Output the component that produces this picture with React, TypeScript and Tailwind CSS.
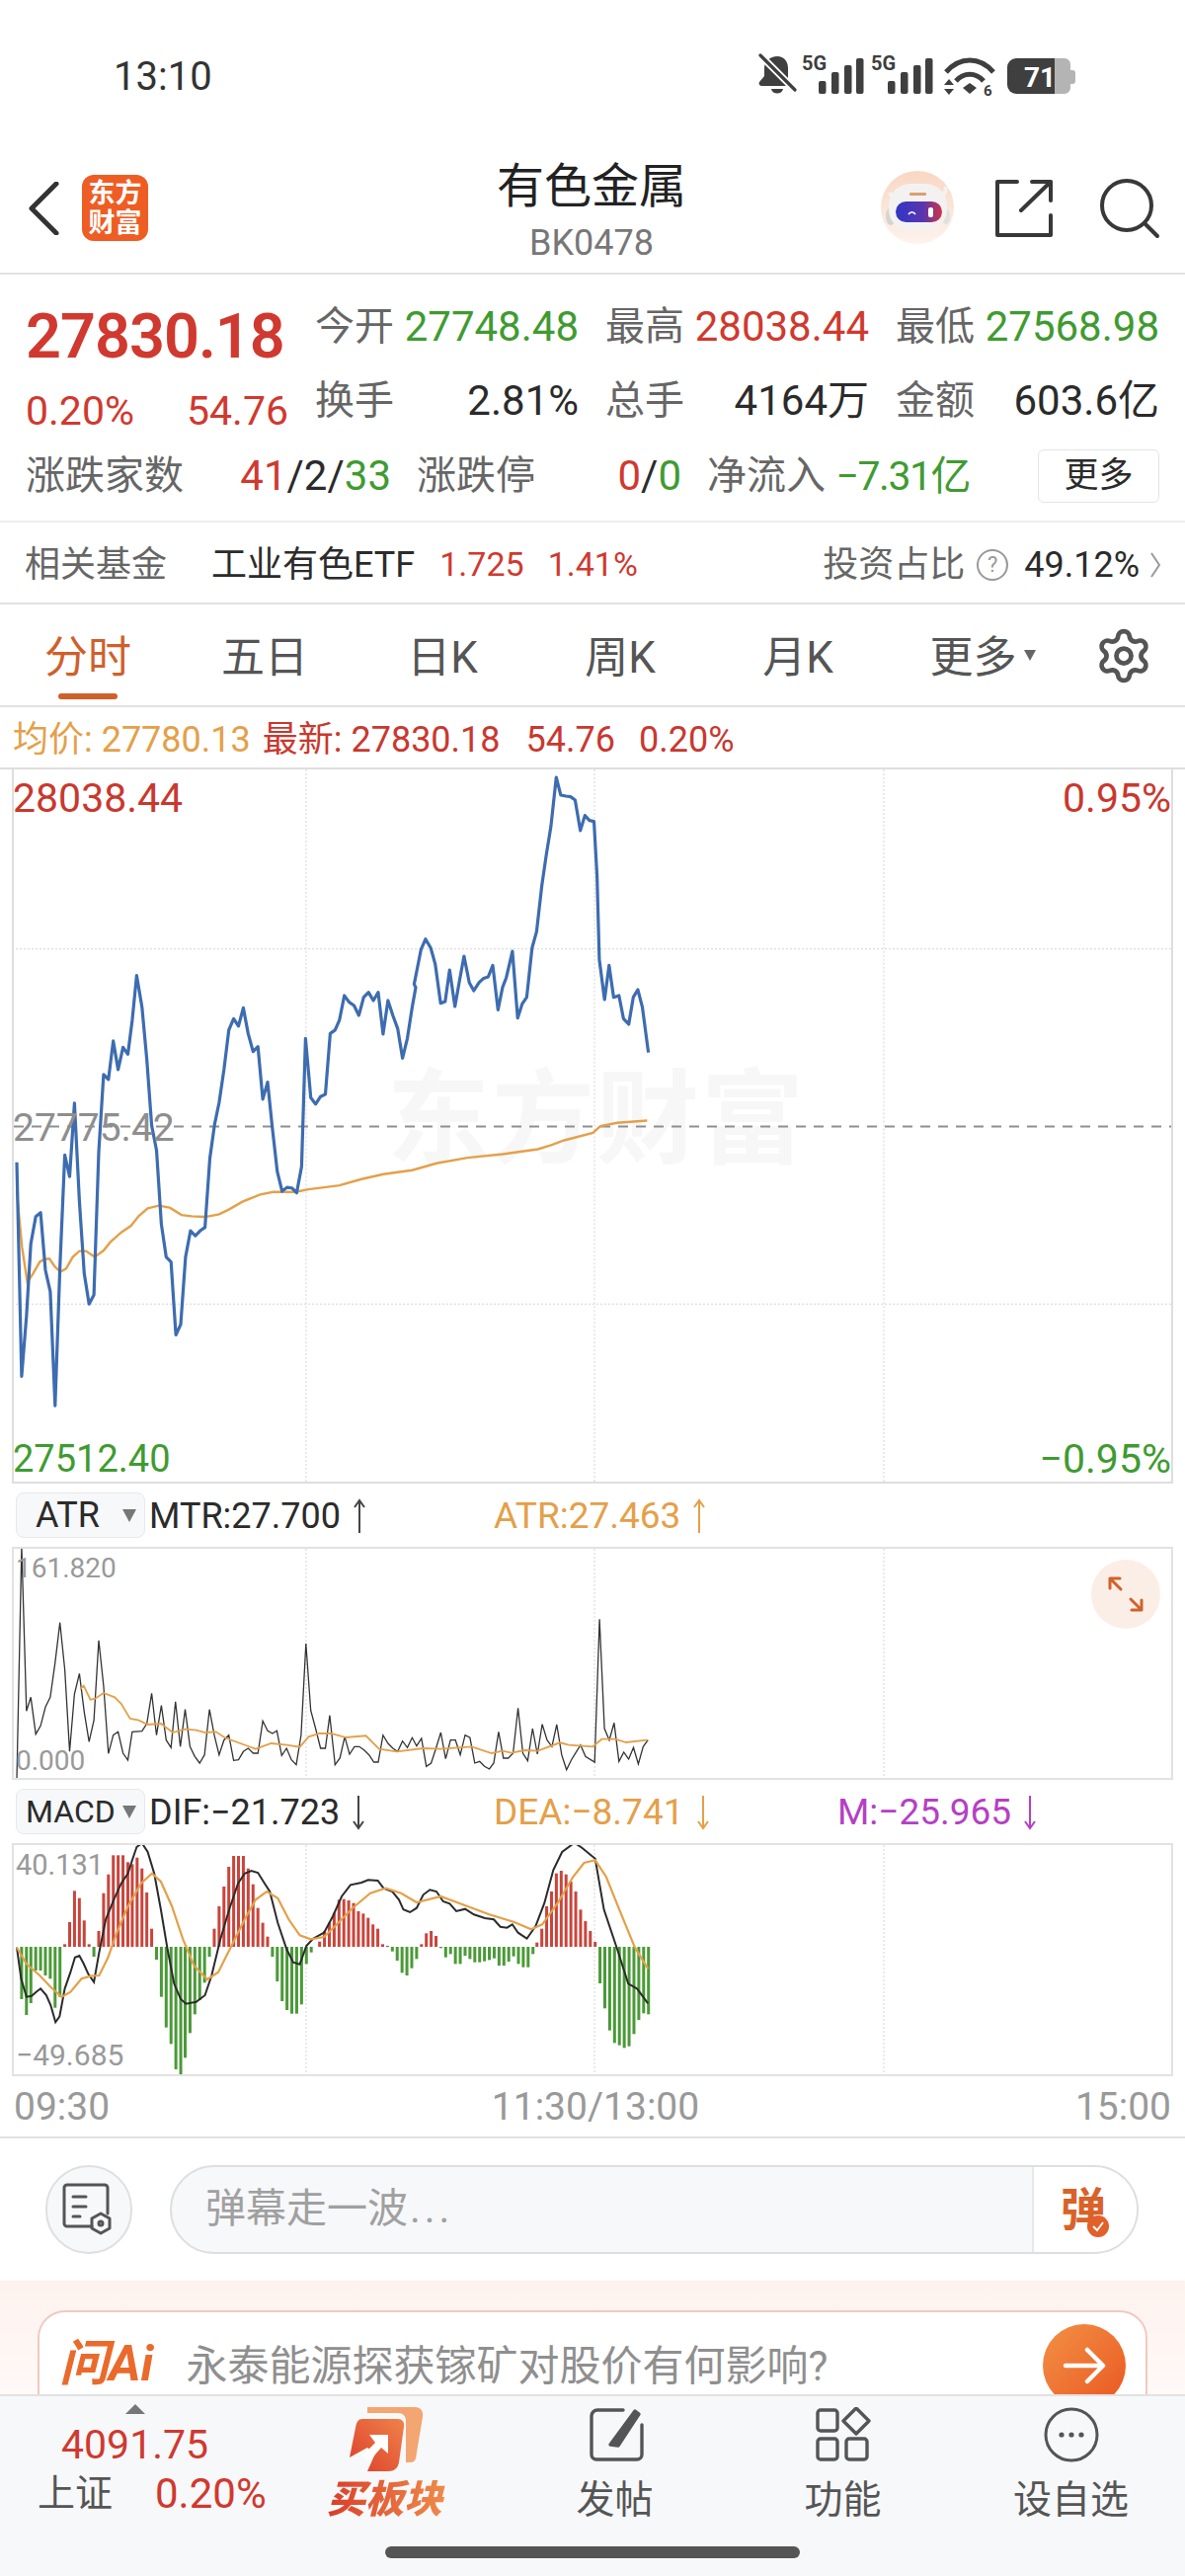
import React from "react";
import { Settings } from "lucide-react";

type P = number[];
const YEL = "#e4a049";

// traced chart data: pairs of picture coordinates
const blueA: P = [38,532,49,1183,60,1000,70,780,81,697,92,685,103,860,114,925,125,1272,136,850,147,510,158,575,169,352,180,650,191,870,202,963,213,935,224,500,235,265,246,280,257,163,268,250,279,182,290,203,300,100,310,-36,322,60,333,220,344,420,355,495,366,720,377,820,388,835,399,1057,410,1025,421,820,432,740,443,755,454,740,465,730,476,520,487,415,497,350,508,250,519,130,530,95,541,118,552,62,563,140,574,195,585,180,596,340,607,288,618,430,629,560,640,620,651,608,662,610,673,625,684,545,693,155,705,335,716,355,727,332,738,325,749,140,760,130,770,100,781,25,792,45,803,55,814,85,825,30,836,15,847,40,858,15,869,142,880,40,891,85,902,125,913,215,924,155,935,60,943,0];
const blueB: P = [548,1430,557,1325,563,1293,570,1320,576,1370,583,1488,589,1483,595,1387,602,1498,608,1420,614,1345,621,1425,627,1450,634,1425,640,1412,646,1408,652,1373,659,1508,665,1440,670,1410,678,1330,685,1533,691,1490,697,1470,704,1320,710,1270,717,1130,723,1035,729,950,736,801,742,855,749,858,755,860,761,870,768,963,774,917,780,932,786,935,790,1100,793,1355,800,1477,806,1373,812,1470,819,1465,825,1535,832,1552,838,1470,844,1447,850,1500,858,1638];
const yelMain: P = [38,620,50,790,62,897,75,870,90,835,100,827,112,825,125,850,137,865,150,855,165,820,180,802,195,802,215,820,235,800,250,775,275,745,297,725,315,695,335,672,360,664,385,670,412,692,435,696,465,698,497,690,520,675,550,652,590,630,620,622,670,622,700,614,770,602,820,583,870,568,935,556,990,535,1060,518,1140,507,1220,492,1250,480,1280,465,1345,442,1362,422,1400,412,1468,405];
const atrBlack: P = [38,905,49,197,60,697,70,655,81,767,92,742,103,685,114,655,125,550,136,428,147,570,158,820,169,645,180,583,191,700,202,790,213,725,224,482,235,620,246,826,257,770,268,760,279,825,290,846,300,760,322,758,333,735,344,643,355,770,366,680,377,785,388,808,398,668,409,805,420,692,431,805,442,835,453,855,464,830,475,692,486,770,497,830,508,785,519,770,530,847,541,845,552,820,563,810,574,825,585,825,596,727,607,757,618,765,628,757,639,832,650,810,661,845,672,860,683,770,694,492,705,695,716,750,727,810,738,810,748,710,760,860,771,840,782,775,793,828,804,805,815,805,826,815,837,830,848,852,858,852,869,770,880,795,891,810,902,820,913,788,924,808,935,778,945,803,956,780,967,865,978,855,989,810,1000,762,1011,842,1022,785,1033,785,1044,830,1055,770,1066,778,1077,855,1088,850,1099,865,1110,873,1120,855,1131,760,1142,840,1153,840,1164,825,1175,688,1186,825,1197,848,1208,750,1219,828,1230,737,1241,785,1252,805,1263,738,1274,830,1285,875,1296,845,1317,800,1328,835,1349,852,1360,418,1371,750,1382,785,1393,733,1404,850,1415,822,1426,843,1437,808,1448,858,1459,805,1470,785];
const atrYel: P = [182,630,190,620,205,662,215,660,235,642,260,655,275,675,295,720,315,725,335,738,365,735,392,762,420,752,445,755,465,762,490,760,510,778,545,795,580,812,615,795,650,800,680,806,700,775,725,765,750,765,785,777,830,772,860,812,900,820,960,810,1000,812,1070,805,1115,825,1140,818,1160,824,1190,816,1220,818,1270,793,1290,800,1345,805,1365,782,1395,782,1420,792,1468,785];
const dif: P = [38,515,48,610,60,665,72,662,82,650,92,640,105,660,115,690,126,742,135,725,147,640,160,590,170,545,180,540,190,565,200,595,213,620,225,530,240,430,258,370,275,320,290,290,300,250,310,210,322,198,335,225,350,290,365,400,380,520,395,625,410,672,422,686,445,680,465,660,480,600,500,490,520,400,540,320,555,290,570,282,585,288,600,320,612,345,630,440,650,520,665,560,680,566,695,510,710,488,735,470,755,420,775,360,795,325,820,318,835,310,857,312,870,335,890,345,905,370,915,400,930,408,945,395,960,355,975,340,990,345,1005,375,1020,382,1035,405,1055,398,1075,415,1100,426,1120,430,1135,452,1150,455,1162,445,1175,470,1195,488,1215,450,1235,380,1255,280,1275,225,1303,197,1320,212,1350,245,1370,400,1400,520,1425,625,1445,640,1470,685];
const dea: P = [38,515,60,565,90,600,115,635,140,665,160,650,185,610,205,602,225,600,245,545,265,470,290,390,320,320,345,290,365,315,390,390,415,490,440,570,470,612,495,590,525,510,555,430,580,370,605,345,630,365,655,430,680,478,705,490,735,483,760,450,800,395,840,350,875,335,910,350,945,378,1000,360,1050,385,1110,415,1165,437,1205,460,1230,445,1265,380,1300,300,1325,258,1350,250,1375,300,1405,400,1440,515,1470,580];
const bars: P = [49,672,60,720,70,684,81,585,92,585,103,600,114,610,125,698,136,665,147,505,158,438,169,343,180,365,191,433,202,505,213,543,224,465,235,350,246,293,257,235,268,235,279,235,290,256,300,262,311,242,322,275,333,348,344,458,355,552,366,665,377,758,388,808,399,885,410,905,420,850,431,775,442,718,453,675,464,622,475,543,486,458,497,390,508,330,519,270,530,237,541,237,552,237,563,275,574,323,585,395,596,440,607,482,618,543,629,618,640,678,651,705,662,716,673,716,684,688,695,565,706,530,725,497,736,465,747,440,758,410,769,370,780,368,791,372,802,380,813,405,824,412,835,425,846,445,857,458,868,505,879,510,890,527,901,555,912,592,923,600,934,578,945,550,956,505,967,472,978,465,989,480,1000,517,1011,545,1022,535,1033,565,1044,565,1055,540,1066,550,1077,560,1088,560,1099,557,1110,553,1121,548,1132,570,1143,570,1154,558,1165,542,1176,565,1187,575,1198,575,1209,535,1218,500,1229,458,1240,390,1251,345,1262,290,1273,282,1284,293,1295,315,1306,345,1317,400,1328,435,1339,465,1350,498,1361,624,1372,700,1383,767,1394,805,1405,812,1416,820,1427,815,1438,778,1449,735,1460,715,1471,718];

const line = (a: P, sx: number, oy: number) => {
  const out: string[] = [];
  for (let i = 0; i < a.length; i += 2) out.push(`${(a[i] / sx).toFixed(1)},${(oy + a[i + 1] / 3).toFixed(1)}`);
  return out.join(" ");
};

function Grid({ top, bottom, rows }: { top: number; bottom: number; rows: number[] }) {
  return (
    <g stroke="#d4d4d4" strokeWidth="1" strokeDasharray="2 2">
      {[310, 602, 895].map((x) => <line key={x} x1={x} x2={x} y1={top} y2={bottom} />)}
      {rows.map((y) => <line key={y} x1={12} x2={1188} y1={y} y2={y} />)}
    </g>
  );
}

function MainChart() {
  return (
    <div className="relative mx-[12px] h-[723px] border-x-2 border-b-2 border-[#dedede]">
      <svg className="absolute inset-0 h-full w-full" viewBox="14 779 1172 722" preserveAspectRatio="none">
        <Grid top={779} bottom={1501} rows={[961, 1321]} />
      </svg>
      <div className="absolute left-[378px] top-[296px] text-[104px] font-bold leading-[120px] tracking-[2px] text-[#f7f7f7]">东方财富</div>
      <svg className="absolute inset-0 h-full w-full" viewBox="14 779 1172 722" preserveAspectRatio="none">
        <line x1="14" x2="1186" y1="1141" y2="1141" stroke="#8f8f8f" strokeWidth="2" strokeDasharray="10 8" />
        <polyline fill="none" stroke={YEL} strokeWidth="2.4" points={line(yelMain, 2.24, 1000)} />
        <polyline fill="none" stroke="#3d6cb0" strokeWidth="3.2" strokeLinejoin="round" points={line(blueA, 2.24, 1000) + " " + line(blueB, 1.3067, 520)} />
      </svg>
      <span className="absolute left-[-1px] top-[6px] text-[41px] leading-[46px] text-[#c9382f]">28038.44</span>
      <span className="absolute right-0 top-[6px] text-[41px] leading-[46px] text-[#c9382f]">0.95%</span>
      <span className="absolute left-[-1px] top-[340px] text-[39px] leading-[46px] text-[#8e8e8e]">27775.42</span>
      <span className="absolute bottom-[0px] left-[-1px] text-[38px] leading-[46px] text-[#3f9b31]">27512.40</span>
      <span className="absolute bottom-[0px] right-0 text-[41px] leading-[46px] text-[#3f9b31]">−0.95%</span>
    </div>
  );
}

function Arrow({ up, color }: { up: boolean; color: string }) {
  return (
    <svg width="16" height="36" viewBox="0 0 16 36" className="ml-[11px]">
      <path d={up ? "M8 35V2M3 9l5-7 5 7" : "M8 1v33M3 27l5 7 5-7"} fill="none" stroke={color} strokeWidth="2" />
    </svg>
  );
}

function Legend({ name, small, a, ac, b, bc, c }: { name: string; small?: boolean; a: string; ac: string; b: string; bc: string; c?: React.ReactNode }) {
  return (
    <div className="relative flex h-[64px] items-center pl-[16px] text-[37px] leading-[42px]">
      <div className={"flex h-[46px] w-[131px] items-center justify-between rounded-[8px] border border-[#e6e8ec] bg-[#f7f8fa] pr-[8px] text-[#2b2b2b] " + (small ? "text-[32px]" : "text-[36px]")}>
        <span className={small ? "pl-[9px]" : "pl-[19px]"}>{name}</span>
        <span className="h-0 w-0 border-x-[7px] border-t-[13px] border-x-transparent border-t-[#777]" />
      </div>
      <div className="ml-[4px] flex w-[349px] items-center pt-[2px] text-[36px] text-[#2b2b2b]">{a}<Arrow up={ac === "up"} color="#444" /></div>
      <div className="flex w-[348px] items-center pt-[2px] text-[#e4a049]">{b}<Arrow up={bc === "up"} color="#e4a049" /></div>
      {c}
    </div>
  );
}

function AtrChart() {
  return (
    <div className="relative mx-[12px] h-[236px] border-2 border-[#e2e2e2]">
      <svg className="absolute inset-0 h-full w-full" viewBox="14 1568 1172 232" preserveAspectRatio="none">
        <Grid top={1568} bottom={1800} rows={[]} />
        <polyline fill="none" stroke="#333" strokeWidth="1.3" points={line(atrBlack, 2.24, 1500)} />
        <polyline fill="none" stroke={YEL} strokeWidth="1.8" points={line(atrYel, 2.24, 1500)} />
      </svg>
      <span className="absolute left-[2px] top-[2px] text-[28px] leading-[36px] text-[#999]">161.820</span>
      <span className="absolute bottom-[-1px] left-[2px] text-[28px] leading-[36px] text-[#999]">0.000</span>
      <div className="absolute right-[11px] top-[11px] flex h-[70px] w-[70px] items-center justify-center rounded-full bg-[#fbeee6]">
        <svg width="38" height="38" viewBox="0 0 38 38" fill="none" stroke="#d0622d" strokeWidth="3" strokeLinecap="round" strokeLinejoin="round">
          <path d="M3 13V3h10M3 3l11 11M35 25v10H25M35 35L24 24" />
        </svg>
      </div>
    </div>
  );
}

function MacdChart() {
  const rects: React.ReactNode[] = [];
  for (let i = 0; i < bars.length; i += 2) {
    const x = bars[i] / 2.24;
    const y = 1800 + bars[i + 1] / 3;
    const up = y < 1971;
    rects.push(<rect key={i} x={x - 1.5} width="3" y={up ? y : 1971} height={Math.abs(y - 1971)} fill={up ? "#c9453c" : "#4a9a37"} />);
  }
  return (
    <div className="relative mx-[12px] h-[236px] border-2 border-[#e2e2e2]">
      <svg className="absolute inset-0 h-full w-full" viewBox="14 1868 1172 232" preserveAspectRatio="none">
        <Grid top={1868} bottom={2100} rows={[]} />
        {rects}
        <polyline fill="none" stroke="#2b2b2b" strokeWidth="2" points={line(dif, 2.24, 1800)} />
        <polyline fill="none" stroke={YEL} strokeWidth="2.2" points={line(dea, 2.24, 1800)} />
      </svg>
      <span className="absolute left-[2px] top-[2px] text-[29px] leading-[36px] text-[#999]">40.131</span>
      <span className="absolute bottom-[1px] left-[2px] text-[30px] leading-[36px] text-[#999]">−49.685</span>
    </div>
  );
}

function StatusIcons() {
  return (
    <svg width="322" height="56" viewBox="768 46 322 56" fill="#3f3f3f" className="mr-[110px] mt-[46px]">
      <path d="M787 57c7 0 11 5 11 12v11l5 7h-31c-3 0-4-2-3-4l5-6v-8c0-7 6-12 13-12zM781 90h12c-1 6-11 6-12 0z" />
      <line x1="770" y1="56" x2="805" y2="91" stroke="#fff" strokeWidth="7" />
      <line x1="770" y1="56" x2="805" y2="91" stroke="#3f3f3f" strokeWidth="3.2" strokeLinecap="round" />
      <text x="812" y="71" fontSize="20" fontWeight="700" fontFamily="Roboto">5G</text>
      {[[829,82],[842,73],[855,66],[867,59]].map(([x, y]) => <rect key={x} x={x} y={y} width="7.5" height={95 - y} rx="2" />)}
      <text x="882" y="71" fontSize="20" fontWeight="700" fontFamily="Roboto">5G</text>
      {[[899,82],[912,73],[925,66],[937,59]].map(([x, y]) => <rect key={x} x={x} y={y} width="7.5" height={95 - y} rx="2" />)}
      <path d="M958 73c14-16 34-16 48 0" fill="none" stroke="#3f3f3f" strokeWidth="5" />
      <path d="M968 82c8-9 20-9 28 0" fill="none" stroke="#3f3f3f" strokeWidth="5" />
      <path d="M975 89l7-5 7 5-7 6z" />
      <path d="M956 86l5-6 5 6zM956 90h10l-5 6z" />
      <text x="996" y="97" fontSize="15" fontWeight="700" fontFamily="Roboto">6</text>
      <path d="M1068 59h10a6 6 0 016 6v6h2a3 3 0 013 3v8a3 3 0 01-3 3h-2v4a6 6 0 01-6 6h-10z" fill="#b4b4b4" />
      <path d="M1029 59h39v36h-39a9 9 0 01-9-9V68a9 9 0 019-9z" />
      <text x="1037" y="88" fontSize="28" fontWeight="700" fontFamily="Roboto" fill="#fff">71</text>
    </svg>
  );
}

function Robot() {
  return (
    <svg width="74" height="74" viewBox="0 0 74 74">
      <defs>
        <linearGradient id="av" x1="0" y1="0" x2="0" y2="1"><stop offset="0" stopColor="#f9d7c2" /><stop offset="1" stopColor="#fdf3ee" /></linearGradient>
        <linearGradient id="vis" x1="0" y1="0" x2="1" y2="0"><stop offset="0" stopColor="#2f37c4" /><stop offset="0.6" stopColor="#5b36ae" /><stop offset="1" stopColor="#cf3446" /></linearGradient>
      </defs>
      <circle cx="37" cy="37" r="37" fill="url(#av)" />
      <path d="M9 22c2 4 4 6 8 7M66 16c0 5-2 9-7 11" stroke="#f4f1ee" strokeWidth="4" fill="none" />
      <ellipse cx="10" cy="46" rx="5" ry="9" fill="#d6d4d2" />
      <ellipse cx="66" cy="46" rx="4" ry="8" fill="#e2e0de" />
      <rect x="8" y="13" width="59" height="48" rx="22" fill="#f3f2f1" />
      <rect x="29" y="22" width="17" height="3" rx="1" fill="#d9a071" />
      <rect x="15" y="31" width="47" height="21" rx="10.5" fill="url(#vis)" />
      <path d="M28 44c2-3 5-3 7 0" stroke="#fff" strokeWidth="1.6" fill="none" />
      <rect x="48" y="37" width="5" height="10" rx="2" fill="#fff" />
    </svg>
  );
}

function Header() {
  return (
    <div className="flex h-[119px] items-start border-b-2 border-[#e2e2e2]">
      <div className="flex w-[380px] pl-[28px] pt-[18px]">
        <svg width="32" height="54" viewBox="0 0 32 54" className="mt-[7px]"><path d="M29 2L4 27l25 25" fill="none" stroke="#333" strokeWidth="5" strokeLinecap="round" strokeLinejoin="round" /></svg>
        <div className="ml-[23px] flex h-[67px] w-[67px] flex-col items-center justify-center rounded-[12px] bg-[#ee5d24] text-[27px] font-bold leading-[30px] text-white"><span>东方</span><span>财富</span></div>
      </div>
      <div className="flex w-[438px] flex-col items-center">
        <div className="mt-[1px] text-[48px] leading-[58px] text-[#222]">有色金属</div>
        <div className="mt-[8px] text-[36px] leading-[40px] text-[#777]">BK0478</div>
      </div>
      <div className="flex pl-[74px] pt-[14px]">
        <Robot />
        <svg width="60" height="60" viewBox="0 0 60 60" className="ml-[41px] mt-[8px]" fill="none" stroke="#383838" strokeWidth="4" strokeLinecap="round" strokeLinejoin="round">
          <path d="M23 3H3v54h54V37M27 32L57 3M38 3h19v19" />
        </svg>
        <svg width="62" height="62" viewBox="0 0 62 62" className="ml-[46px] mt-[7px]" fill="none" stroke="#383838" strokeWidth="4" strokeLinecap="round">
          <circle cx="28" cy="28" r="25" /><path d="M46 46l13 13" />
        </svg>
      </div>
    </div>
  );
}

function Cell({ label, value, color }: { label: string; value: string; color: string }) {
  return (
    <div className="flex h-[75px] w-[267px] items-center justify-between">
      <span className="text-[#666]">{label}</span>
      <span className={"text-[42px] " + color}>{value}</span>
    </div>
  );
}

function Info() {
  return (
    <div className="h-[251px] border-b-2 border-[#eeeeee] px-[26px] text-[40px] leading-[48px]">
      <div className="flex h-[177px]">
        <div className="w-[294px] pt-[25px]">
          <div className="flex h-[75px] items-center text-[63px] font-semibold tracking-[-1px] text-[#d0392f]">27830.18</div>
          <div className="flex h-[75px] w-[266px] items-center justify-between text-[41px] text-[#d0392f]"><span>0.20%</span><span>54.76</span></div>
        </div>
        <div className="grid grid-cols-[267px_267px_267px] content-start gap-x-[27px] pt-[15px]">
          <Cell label="今开" value="27748.48" color="text-[#3f9b31]" />
          <Cell label="最高" value="28038.44" color="text-[#d0392f]" />
          <Cell label="最低" value="27568.98" color="text-[#3f9b31]" />
          <Cell label="换手" value="2.81%" color="text-[#2b2b2b]" />
          <Cell label="总手" value="4164万" color="text-[#2b2b2b]" />
          <Cell label="金额" value="603.6亿" color="text-[#2b2b2b]" />
        </div>
      </div>
      <div className="flex h-[54px] items-center">
        <div className="grid grid-cols-[370px_268px_266px] gap-x-[26px]">
          <div className="flex justify-between"><span className="text-[#666]">涨跌家数</span><span className="text-[42px]"><span className="text-[#d0392f]">41</span><span className="text-[#2b2b2b]">/2/</span><span className="text-[#3f9b31]">33</span></span></div>
          <div className="flex justify-between"><span className="text-[#666]">涨跌停</span><span className="text-[42px]"><span className="text-[#d0392f]">0</span><span className="text-[#2b2b2b]">/</span><span className="text-[#3f9b31]">0</span></span></div>
          <div className="flex justify-between"><span className="text-[#666]">净流入</span><span className="text-[41px] tracking-[-1.5px] text-[#3f9b31]">−7.31亿</span></div>
        </div>
        <div className="ml-auto flex h-[54px] w-[123px] items-center justify-center rounded-[6px] border border-[#e4e4e4] text-[35px] text-[#2b2b2b]">更多</div>
      </div>
    </div>
  );
}

function Fund() {
  return (
    <div className="flex h-[83px] items-center border-b-2 border-[#e2e2e2] pl-[25px] pr-[24px] pt-[4px] text-[36px]">
      <span className="text-[#666]">相关基金</span>
      <span className="ml-[45px] text-[#2b2b2b]">工业有色ETF</span>
      <span className="ml-[25px] text-[34px] text-[#d0392f]">1.725</span>
      <span className="ml-[24px] text-[34px] text-[#d0392f]">1.41%</span>
      <span className="ml-auto text-[#666]">投资占比</span>
      <span className="ml-[12px] flex h-[32px] w-[32px] items-center justify-center rounded-full border-2 border-[#999] text-[22px] leading-none text-[#999]">?</span>
      <span className="ml-[16px] text-[#2b2b2b]">49.12%</span>
      <svg width="12" height="28" viewBox="0 0 12 28" className="ml-[10px]"><path d="M2 2l8 12-8 12" fill="none" stroke="#999" strokeWidth="2" /></svg>
    </div>
  );
}

function Tabs() {
  const tabs = ["五日", "日K", "周K", "月K"];
  return (
    <div className="flex h-[104px] items-center border-b-2 border-[#e2e2e2] text-[44px] leading-[52px] text-[#555]">
      <div className="relative flex h-full w-[178px] items-center justify-center pt-[6px] text-[#cf602b]">
        分时
        <span className="absolute bottom-[6px] left-[59px] h-[6px] w-[60px] rounded-[3px] bg-[#cf602b]" />
      </div>
      {tabs.map((t) => <div key={t} className="flex w-[180px] justify-center pt-[6px]">{t}</div>)}
      <div className="flex w-[182px] items-center justify-center pl-[12px] pt-[6px]">
        更多
        <span className="ml-[7px] mt-[-6px] h-0 w-0 border-x-[6px] border-t-[11px] border-x-transparent border-t-[#666]" />
      </div>
      <Settings size={60} strokeWidth={1.9} color="#555" className="ml-[28px] mt-[2px]" />
    </div>
  );
}

function Bottom() {
  return (
    <div className="relative h-[261px] bg-[#fff]">
      <div className="flex h-[146px] items-center border-t-2 border-[#e2e2e2] pl-[46px] pr-[47px]">
        <div className="flex h-[90px] w-[88px] items-center justify-center rounded-full border-2 border-[#dfdfdf] bg-[#f7f8fa]">
          <svg width="54" height="54" viewBox="0 0 54 54" fill="none" stroke="#555" strokeWidth="3" strokeLinecap="round" strokeLinejoin="round">
            <path d="M30 44H5a3 3 0 01-3-3V5a3 3 0 013-3h38a3 3 0 013 3v26M11 14h13M11 24h13M11 34h7" />
            <path d="M39 31l9 5v10l-9 5-9-5V36z" /><circle cx="39" cy="41" r="2" />
          </svg>
        </div>
        <div className="ml-[38px] flex h-[90px] flex-1 overflow-hidden rounded-full border-2 border-[#dfdfdf] bg-[#f7f8fa]">
          <div className="flex flex-1 items-center pl-[34px] text-[41px] text-[#a0a0a0]">弹幕走一波<span className="pl-[2px] tracking-[4px]">...</span></div>
          <div className="relative flex w-[106px] items-center border-l-2 border-[#e8e8e8] bg-white pl-[27px] text-[46px] font-bold text-[#d9622a]">
            弹
            <span className="absolute left-[54px] top-[49px] flex h-[22px] w-[22px] items-center justify-center rounded-full bg-[#e2602a]">
              <svg width="14" height="14" viewBox="0 0 14 14"><path d="M2 7l4 4 6-8" fill="none" stroke="#fff" strokeWidth="2" /></svg>
            </span>
          </div>
        </div>
      </div>
      <div className="h-[115px] overflow-hidden bg-gradient-to-b from-[#fdf2ee] to-[#fff9f7] px-[38px] pt-[30px]">
        <div className="flex h-[120px] items-start rounded-t-[28px] border-2 border-[#f0c9bf] bg-white pl-[20px] pr-[20px] pt-[22px]">
          <span className="text-[50px] font-bold italic leading-[60px] text-[#ea6a2c]">问Ai</span>
          <span className="ml-[33px] mt-[5px] text-[42px] leading-[56px] text-[#8f8f8f]">永泰能源探获镓矿对股价有何影响?</span>
          <span className="ml-auto mt-[-10px] flex h-[84px] w-[84px] items-center justify-center rounded-full bg-gradient-to-br from-[#f29045] to-[#e9551f]">
            <svg width="44" height="44" viewBox="0 0 44 44" fill="none" stroke="#fff" strokeWidth="4.5" strokeLinecap="round" strokeLinejoin="round"><path d="M3 22h37M25 6l16 16-16 16" /></svg>
          </span>
        </div>
      </div>
    </div>
  );
}

function NavBar() {
  return (
    <div className="relative h-[184px] border-t-2 border-[#e2e2e2] bg-[#f7f8fa]">
      <div className="grid h-full grid-cols-[276px_231px_231px_231px_231px]">
        <div className="relative pl-[38px] pt-[25px]">
          <span className="absolute left-[127px] top-[8px] h-0 w-0 border-x-[10px] border-b-[10px] border-x-transparent border-b-[#777]" />
          <div className="pl-[24px] text-[41px] leading-[48px] text-[#d0392f]">4091.75</div>
          <div className="flex h-[50px] items-center text-[38px]">
            <span className="text-[#555]">上证</span>
            <span className="ml-[43px] text-[42px] text-[#d0392f]">0.20%</span>
          </div>
        </div>
        <div className="flex flex-col items-center pt-[11px]">
          <svg width="76" height="66" viewBox="0 0 76 66">
            <defs>
              <linearGradient id="bk" x1="0" y1="1" x2="1" y2="0"><stop offset="0" stopColor="#db3f2b" /><stop offset="1" stopColor="#f0824a" /></linearGradient>
            </defs>
            <path d="M18 0h48c6 0 9 4 8 10l-7 42c-1 3-3 4-6 4h-4V14c0-5-3-8-8-8H18z" fill="#f3a672" />
            <path d="M13 12h36c4 0 7 3 6 8l-5 36c-1 6-5 9-11 9H18l8-18-8-6-18 10 6-30c1-6 3-9 7-9z" fill="url(#bk)" />
            <path d="M20 28h19v19l-7-6-12 14-7-6 13-13z" fill="#fff" />
          </svg>
          <span className="mt-[5px] bg-gradient-to-r from-[#d93a2a] to-[#ef8a4a] bg-clip-text pr-[4px] text-[39px] font-black italic leading-[46px] text-transparent">买板块</span>
        </div>
        <div className="flex flex-col items-center pt-[11px] text-[39px] leading-[48px] text-[#555]">
          <svg width="60" height="56" viewBox="0 0 60 56" fill="none" stroke="#555" strokeWidth="3.4" strokeLinecap="round" strokeLinejoin="round">
            <path d="M38 3H12a6 6 0 00-6 6v39a5 5 0 005 5h41a5 5 0 005-5V18" /><path d="M25 38L50 4l4 3-21 32z" fill="#555" />
          </svg>
          <span className="mt-[14px]">发帖</span>
        </div>
        <div className="flex flex-col items-center pt-[11px] text-[39px] leading-[48px] text-[#555]">
          <svg width="56" height="56" viewBox="0 0 56 56" fill="none" stroke="#555" strokeWidth="3.4" strokeLinejoin="round">
            <rect x="2" y="3" width="20" height="21" rx="3" /><path d="M41 1l13 13-13 13-13-13z" /><rect x="2" y="32" width="20" height="21" rx="3" /><rect x="31" y="32" width="21" height="21" rx="3" />
          </svg>
          <span className="mt-[14px]">功能</span>
        </div>
        <div className="flex flex-col items-center pt-[11px] text-[39px] leading-[48px] text-[#555]">
          <svg width="56" height="56" viewBox="0 0 56 56" fill="#555"><circle cx="28" cy="28" r="26" fill="none" stroke="#555" strokeWidth="3" /><circle cx="18" cy="28" r="2.6" /><circle cx="28" cy="28" r="2.6" /><circle cx="38" cy="28" r="2.6" /></svg>
          <span className="mt-[14px]">设自选</span>
        </div>
      </div>
      <span className="absolute bottom-[18px] left-[390px] h-[12px] w-[420px] rounded-full bg-[#555]" />
    </div>
  );
}

export default function App() {
  return (
    <div className="h-[2608px] w-[1200px] overflow-hidden bg-white [font-family:Roboto,'Noto_Sans_CJK_SC',sans-serif]">
      <div className="flex h-[159px] items-start justify-between">
        <span className="ml-[115px] mt-[54px] text-[40px] leading-[48px] text-[#333]">13:10</span>
        <StatusIcons />
      </div>
      <Header />
      <Info />
      <Fund />
      <Tabs />
      <div className="flex h-[63px] items-center border-b-2 border-[#dedede] pl-[13px] pt-[4px] text-[36px] leading-[44px]">
        <span className="text-[#e4a049]">均价: 27780.13</span>
        <span className="ml-[12px] text-[#c9382f]">最新: 27830.18</span>
        <span className="ml-[26px] text-[#c9382f]">54.76</span>
        <span className="ml-[24px] text-[#c9382f]">0.20%</span>
      </div>
      <MainChart />
      <Legend name="ATR" a="MTR:27.700" ac="up" b="ATR:27.463" bc="up" />
      <AtrChart />
      <Legend name="MACD" small a="DIF:−21.723" ac="down" b="DEA:−8.741" bc="down"
        c={<div className="flex items-center pt-[2px] text-[#b63fc4]">M:−25.965<Arrow up={false} color="#b63fc4" /></div>} />
      <MacdChart />
      <div className="flex h-[61px] items-center justify-between px-[14px] text-[39px] leading-[46px] text-[#999]">
        <span>09:30</span>
        <span className="ml-[6px]">11:30/13:00</span>
        <span>15:00</span>
      </div>
      <Bottom />
      <NavBar />
    </div>
  );
}
